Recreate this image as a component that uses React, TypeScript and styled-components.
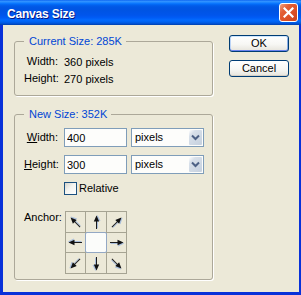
import styled, { createGlobalStyle } from 'styled-components';

const GlobalStyle = createGlobalStyle`
  html, body { margin: 0; padding: 0; overflow: hidden; }
  body { font-family: "Liberation Sans", Arial, sans-serif; font-size: 11px; color: #000; }
  * { box-sizing: border-box; }
`;

const Window = styled.div`
  width: 301px;
  height: 295px;
  display: flex;
  flex-direction: column;
  background: #0831d9;
`;

const TitleBar = styled.div`
  height: 25px;
  flex: none;
  display: flex;
  align-items: flex-start;
  justify-content: space-between;
  padding: 0 3px 0 7px;
  background: linear-gradient(to bottom, #0058ee 0%, #3593ff 4%, #288eff 8%, #127dff 12%, #036ffc 16%, #0262ee 20%, #0057e5 28%, #0054e3 40%, #0055eb 60%, #005bf5 70%, #026afe 80%, #0062ef 88%, #0052d6 94%, #0040ab 100%);
`;

const Title = styled.span`
  margin-top: 7px;
  font-family: "Liberation Sans", Arial, sans-serif;
  font-size: 12px;
  line-height: 14px;
  font-weight: bold;
  letter-spacing: -0.2px;
  color: #fff;
  text-shadow: 1px 1px 0 #0a1883;
`;

const CloseButton = styled.div`
  margin-top: 3px;
  width: 19px;
  height: 19px;
  border: 1px solid #fff;
  border-radius: 3px;
  background: linear-gradient(135deg, #f0a080 0%, #e35f35 30%, #dc4f25 65%, #c8431d 100%);
  display: flex;
  align-items: center;
  justify-content: center;
`;

const Body = styled.div`
  flex: 1;
  margin: 0 2px 3px 3px;
  background: #ece9d8;
  display: flex;
  gap: 16px;
  padding: 10px 0 0 11px;
`;

const LeftColumn = styled.div`
  width: 199px;
  display: flex;
  flex-direction: column;
  gap: 12px;
`;

const RightColumn = styled.div`
  width: 60px;
  display: flex;
  flex-direction: column;
  gap: 8px;
`;

const Group = styled.fieldset<{ $pt: number; $pb: number }>`
  margin: 0;
  min-width: 0;
  padding: ${p => p.$pt}px 7px ${p => p.$pb}px 9px;
  border: 1px solid #aca899;
  border-radius: 3px;
  box-shadow: 1px 1px 0 #fff;
`;

const Legend = styled.legend`
  padding: 0 4px 0 5px;
  font-size: 11px;
  line-height: 13px;
  color: #0046d5;
`;

const InfoGrid = styled.div`
  display: grid;
  grid-template-columns: 34px auto;
  column-gap: 6px;
  grid-auto-rows: 17px;
  align-items: center;
`;

const FormGrid = styled.div`
  display: grid;
  grid-template-columns: 34px 1fr;
  column-gap: 6px;
  row-gap: 8px;
  align-items: center;
`;

const Label = styled.span`
  text-align: right;
  white-space: nowrap;
  line-height: 13px;
`;

const AnchorLabel = styled(Label)`
  align-self: start;
  margin-top: 8px;
`;

const Controls = styled.div`
  display: flex;
  gap: 4px;
`;

const TextBox = styled.input`
  width: 63px;
  height: 19px;
  border: 1px solid #7f9db9;
  background: #fdfdfb;
  padding: 0 2px;
  font-family: "Liberation Sans", Arial, sans-serif;
  font-size: 11px;
  color: #000;
  outline: none;
`;

const Select = styled.div`
  width: 73px;
  height: 19px;
  border: 1px solid #7f9db9;
  background: #fdfdfb;
  display: flex;
  padding: 1px;
`;

const SelectText = styled.span`
  flex: 1;
  padding-left: 2px;
  line-height: 15px;
`;

const DropButton = styled.span`
  width: 13px;
  display: flex;
  align-items: center;
  justify-content: center;
  background: linear-gradient(135deg, #ffffff 0%, #d8e0ea 25%, #c5d0de 100%);
  border-radius: 1px;
`;

const CheckRow = styled.label`
  grid-column: 2;
  display: flex;
  align-items: center;
  gap: 2px;
  line-height: 13px;
`;

const CheckBox = styled.span`
  width: 13px;
  height: 13px;
  border: 1px solid #1c5180;
  background: linear-gradient(135deg, #d6d4cb 0%, #f4f4f0 45%, #ffffff 100%);
`;

const AnchorGrid = styled.div`
  margin-top: 8px;
  margin-left: 1px;
  grid-column: 2;
  display: grid;
  grid-template-columns: 19px 20px 19px;
  grid-template-rows: 20px 19px 20px;
  gap: 1px;
  padding: 1px;
  width: 62px;
  background: #a6a493;
`;

const AnchorCell = styled.div<{ $center?: boolean }>`
  background: ${p => (p.$center ? '#fbfcfa' : '#ece9d8')};
  ${p => p.$center && 'margin: -1px; border: 1px solid #93a8c4; border-radius: 2px;'}
  display: flex;
  align-items: center;
  justify-content: center;
`;

const Button = styled.div<{ $default?: boolean }>`
  height: 17px;
  border: 1px solid #003c74;
  border-radius: 3px;
  background: linear-gradient(to bottom, #ffffff 0%, #f7f7f4 55%, #e6e4dc 100%);
  display: flex;
  align-items: center;
  justify-content: center;
  font-size: 11px;
  line-height: 13px;
  box-shadow: ${p =>
    p.$default
      ? 'inset 0 1px 0 #cee7ff, inset 0 -1px 0 #6982ee, inset 1px 0 0 #bcd4f6, inset -1px 0 0 #89ade4'
      : 'inset 0 -1px 0 #d6d0c5'};
`;

const Chevron = () => (
  <svg width="9" height="7" viewBox="0 0 9 7">
    <path d="M1 1.5 L4.5 5 L8 1.5" fill="none" stroke="#4d6185" strokeWidth="2" />
  </svg>
);

const CloseX = () => (
  <svg width="11" height="11" viewBox="0 0 11 11">
    <path d="M1.5 1.5 L9.5 9.5 M9.5 1.5 L1.5 9.5" stroke="#fff" strokeWidth="2.2" strokeLinecap="square" />
  </svg>
);

const Arrow = ({ angle }: { angle: number }) => (
  <svg width="19" height="19" viewBox="0 0 19 19">
    <g transform={`rotate(${angle} 9.5 9.5)`}>
      <g transform="translate(0.6 1)" fill="#a9bedb" stroke="#a9bedb">
        <line x1="3" y1="9.5" x2="12" y2="9.5" strokeWidth="1" />
        <polygon points="10.5,6.5 16.5,9.5 10.5,12.5" stroke="none" />
      </g>
      <line x1="3" y1="9.5" x2="12" y2="9.5" stroke="#1b1b1b" strokeWidth="1" />
      <polygon points="10.5,6.8 16.5,9.5 10.5,12.2" fill="#111" />
    </g>
  </svg>
);

const anchorAngles = [-135, -90, -45, 180, null, 0, 135, 90, 45];

const App = () => (
  <>
    <GlobalStyle />
    <Window>
      <TitleBar>
        <Title>Canvas Size</Title>
        <CloseButton>
          <CloseX />
        </CloseButton>
      </TitleBar>
      <Body>
        <LeftColumn>
          <Group $pt={5} $pb={8}>
            <Legend>Current Size: 285K</Legend>
            <InfoGrid>
              <Label>Width:</Label>
              <span>360 pixels</span>
              <Label>Height:</Label>
              <span>270 pixels</span>
            </InfoGrid>
          </Group>
          <Group $pt={7} $pb={5}>
            <Legend>New Size: 352K</Legend>
            <FormGrid>
              <Label>
                <u>W</u>idth:
              </Label>
              <Controls>
                <TextBox defaultValue="400" />
                <Select>
                  <SelectText>pixels</SelectText>
                  <DropButton>
                    <Chevron />
                  </DropButton>
                </Select>
              </Controls>
              <Label>
                <u>H</u>eight:
              </Label>
              <Controls>
                <TextBox defaultValue="300" />
                <Select>
                  <SelectText>pixels</SelectText>
                  <DropButton>
                    <Chevron />
                  </DropButton>
                </Select>
              </Controls>
              <CheckRow>
                <CheckBox />
                Relative
              </CheckRow>
              <AnchorLabel>Anchor:</AnchorLabel>
              <AnchorGrid>
                {anchorAngles.map((a, i) => (
                  <AnchorCell key={i} $center={a === null}>
                    {a !== null && <Arrow angle={a} />}
                  </AnchorCell>
                ))}
              </AnchorGrid>
            </FormGrid>
          </Group>
        </LeftColumn>
        <RightColumn>
          <Button $default>OK</Button>
          <Button>Cancel</Button>
        </RightColumn>
      </Body>
    </Window>
  </>
);

export default App;
